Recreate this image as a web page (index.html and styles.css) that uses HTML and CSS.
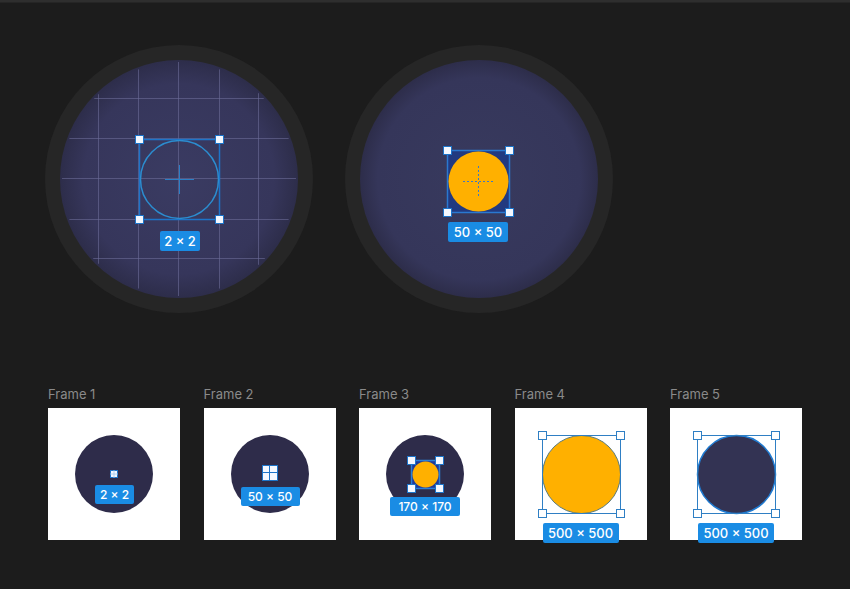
FILE: index.html
```html
<!DOCTYPE html>
<html>
<head>
<meta charset="utf-8">
<link rel="stylesheet" href="styles.css">
</head>
<body>
<div class="page">
  <div class="hero">
    <div class="lens">
      <svg width="268" height="268" viewBox="0 0 268 268">
        <defs>
          <radialGradient id="g1" cx="50%" cy="50%" r="50%">
            <stop offset="0%" stop-color="#3a3b62"/>
            <stop offset="80%" stop-color="#36365b"/>
            <stop offset="100%" stop-color="#2d2d4a"/>
          </radialGradient>
          <clipPath id="c1"><circle cx="134" cy="134" r="117"/></clipPath>
        </defs>
        <circle cx="134" cy="134" r="134" fill="#262626"/>
        <circle cx="134" cy="134" r="119" fill="url(#g1)"/>
        <g clip-path="url(#c1)" stroke="#6c6c98" stroke-opacity="0.6" stroke-width="1">
          <line x1="53.5" y1="0" x2="53.5" y2="268"/>
          <line x1="93.5" y1="0" x2="93.5" y2="268"/>
          <line x1="133.5" y1="0" x2="133.5" y2="268"/>
          <line x1="174.5" y1="0" x2="174.5" y2="268"/>
          <line x1="213.5" y1="0" x2="213.5" y2="268"/>
          <line x1="0" y1="53.5" x2="268" y2="53.5"/>
          <line x1="0" y1="93.5" x2="268" y2="93.5"/>
          <line x1="0" y1="133.5" x2="268" y2="133.5"/>
          <line x1="0" y1="174.5" x2="268" y2="174.5"/>
          <line x1="0" y1="213.5" x2="268" y2="213.5"/>
        </g>
        <rect x="94.5" y="94.5" width="80" height="80" fill="none" stroke="#1d74c9" stroke-width="1.5"/>
        <circle cx="134.5" cy="134.5" r="39" fill="none" stroke="#2b8dd0" stroke-width="1.5"/>
        <g stroke="#2b7fc6" stroke-width="1">
          <line x1="120" y1="134.5" x2="149" y2="134.5"/>
          <line x1="134.5" y1="120" x2="134.5" y2="149"/>
        </g>
        <g fill="#f4f8ff" stroke="#1d74c9" stroke-width="1">
          <rect x="90.5" y="90.5" width="8" height="8"/>
          <rect x="170.5" y="90.5" width="8" height="8"/>
          <rect x="90.5" y="170.5" width="8" height="8"/>
          <rect x="170.5" y="170.5" width="8" height="8"/>
        </g>
      </svg>
      <span class="tag tag-big l1">2 × 2</span>
    </div>
    <div class="lens">
      <svg width="268" height="268" viewBox="0 0 268 268">
        <defs>
          <radialGradient id="g2" cx="50%" cy="50%" r="50%">
            <stop offset="0%" stop-color="#383a5e"/>
            <stop offset="85%" stop-color="#35365a"/>
            <stop offset="100%" stop-color="#2d2d4a"/>
          </radialGradient>
        </defs>
        <circle cx="134" cy="134" r="134" fill="#262626"/>
        <circle cx="134" cy="134" r="119" fill="url(#g2)"/>
        <rect x="102.5" y="105.5" width="62" height="62" fill="#223a80" stroke="#2a78d0" stroke-width="1.5"/>
        <circle cx="133.5" cy="136.5" r="30" fill="#ffb000"/>
        <g stroke="#3b78c8" stroke-width="1" stroke-dasharray="2 2">
          <line x1="118" y1="136.5" x2="150" y2="136.5"/>
          <line x1="133.5" y1="121" x2="133.5" y2="153"/>
        </g>
        <g fill="#f4f8ff" stroke="#1d74c9" stroke-width="1">
          <rect x="98.5" y="101.5" width="8" height="8"/>
          <rect x="160.5" y="101.5" width="8" height="8"/>
          <rect x="98.5" y="163.5" width="8" height="8"/>
          <rect x="160.5" y="163.5" width="8" height="8"/>
        </g>
      </svg>
      <span class="tag tag-big l2">50 × 50</span>
    </div>
  </div>

  <div class="frames">
    <div class="frame-col">
      <div class="frame-name">Frame 1</div>
      <div class="frame">
        <svg width="132" height="132" viewBox="0 0 132 132">
          <circle cx="66" cy="66" r="39" fill="#2e2c4a"/>
          <rect x="62.5" y="62.5" width="7" height="7" fill="#f4f8ff" stroke="#1d74c9" stroke-width="1"/>
          <line x1="66" y1="62" x2="66" y2="70" stroke="#9cc6ee" stroke-width="0.8"/>
          <line x1="62" y1="66" x2="70" y2="66" stroke="#9cc6ee" stroke-width="0.8"/>
        </svg>
        <span class="tag f1">2 × 2</span>
      </div>
    </div>
    <div class="frame-col">
      <div class="frame-name">Frame 2</div>
      <div class="frame">
        <svg width="132" height="132" viewBox="0 0 132 132">
          <circle cx="66" cy="66" r="39" fill="#2e2c4a"/>
          <g fill="#f4f8ff" stroke="#1d74c9" stroke-width="1">
            <rect x="58.5" y="57.5" width="8" height="8"/>
            <rect x="65.5" y="57.5" width="8" height="8"/>
            <rect x="58.5" y="64.5" width="8" height="8"/>
            <rect x="65.5" y="64.5" width="8" height="8"/>
          </g>
        </svg>
        <span class="tag f2">50 × 50</span>
      </div>
    </div>
    <div class="frame-col">
      <div class="frame-name">Frame 3</div>
      <div class="frame">
        <svg width="132" height="132" viewBox="0 0 132 132">
          <circle cx="66" cy="66" r="39" fill="#2e2c4a"/>
          <rect x="52.5" y="52.5" width="28" height="28" fill="#1f3a9a" stroke="#2a7fd8" stroke-width="1.5"/>
          <circle cx="66.5" cy="66.5" r="13" fill="#ffb000"/>
          <g fill="#f4f8ff" stroke="#1d74c9" stroke-width="1">
            <rect x="48.5" y="48.5" width="8" height="8"/>
            <rect x="76.5" y="48.5" width="8" height="8"/>
            <rect x="48.5" y="76.5" width="8" height="8"/>
            <rect x="76.5" y="76.5" width="8" height="8"/>
          </g>
        </svg>
        <span class="tag f3">170 × 170</span>
      </div>
    </div>
    <div class="frame-col">
      <div class="frame-name">Frame 4</div>
      <div class="frame">
        <svg width="132" height="132" viewBox="0 0 132 132">
          <circle cx="66.5" cy="66.5" r="39" fill="#ffb000" stroke="#5a7a7a" stroke-width="1"/>
          <rect x="27.5" y="27.5" width="78" height="78" fill="none" stroke="#2f7fc4" stroke-width="1"/>
          <g fill="#ffffff" stroke="#2f7fc4" stroke-width="1">
            <rect x="23.5" y="23.5" width="8" height="8"/>
            <rect x="101.5" y="23.5" width="8" height="8"/>
            <rect x="23.5" y="101.5" width="8" height="8"/>
            <rect x="101.5" y="101.5" width="8" height="8"/>
          </g>
        </svg>
        <span class="tag f4">500 × 500</span>
      </div>
    </div>
    <div class="frame-col">
      <div class="frame-name">Frame 5</div>
      <div class="frame">
        <svg width="132" height="132" viewBox="0 0 132 132">
          <circle cx="66.5" cy="66.5" r="39" fill="#333353" stroke="#1f7ad0" stroke-width="1.5"/>
          <rect x="27.5" y="27.5" width="78" height="78" fill="none" stroke="#2f7fc4" stroke-width="1"/>
          <g fill="#ffffff" stroke="#2f7fc4" stroke-width="1">
            <rect x="23.5" y="23.5" width="8" height="8"/>
            <rect x="101.5" y="23.5" width="8" height="8"/>
            <rect x="23.5" y="101.5" width="8" height="8"/>
            <rect x="101.5" y="101.5" width="8" height="8"/>
          </g>
        </svg>
        <span class="tag f4">500 × 500</span>
      </div>
    </div>
  </div>
</div>
</body>
</html>
```
FILE: styles.css
```css
html, body {
  margin: 0;
  padding: 0;
  background: #1c1c1c;
}
body {
  width: 850px;
  height: 589px;
  overflow: hidden;
  font-family: Inter, "Noto Sans", sans-serif;
}
.page {
  border-top: 2px solid #2e2e2e;
  box-shadow: inset 0 1px 0 #252525;
  height: 587px;
}
.hero {
  display: flex;
  gap: 32px;
  padding: 43px 0 0 45px;
}
.lens {
  position: relative;
  width: 268px;
  height: 268px;
}
.lens svg {
  display: block;
}
.tag {
  position: absolute;
  background: #1a8ce4;
  color: #ffffff;
  font-size: 12px;
  font-weight: 500;
  line-height: 19px;
  height: 19px;
  border-radius: 2px;
  text-align: center;
  white-space: nowrap;
}
.tag-big {
  font-size: 13px;
  line-height: 20px;
  height: 20px;
}
.l1 { left: 115px; top: 186px; width: 40px; }
.l2 { left: 103px; top: 177px; width: 60px; }

.frames {
  display: flex;
  gap: 23px;
  padding: 74px 0 0 48px;
}
.frame-col {
  width: 132.5px;
  display: flex;
  flex-direction: column;
}
.frame-name {
  color: #8a8a8a;
  font-size: 13px;
  line-height: 16px;
  height: 16px;
  margin-bottom: 5px;
  margin-top: -1px;
  padding-bottom: 1px;
}
.frame {
  position: relative;
  width: 132px;
  height: 132px;
  background: #ffffff;
}
.frame svg {
  display: block;
}
.f1 { left: 47px; top: 77px; width: 39px; }
.f2 { left: 37px; top: 79px; width: 59px; }
.f3 { left: 31px; top: 89px; width: 70px; }
.f4 { left: 28px; top: 115px; width: 76px; height: 20px; line-height: 20px; font-size: 13px; }
```
